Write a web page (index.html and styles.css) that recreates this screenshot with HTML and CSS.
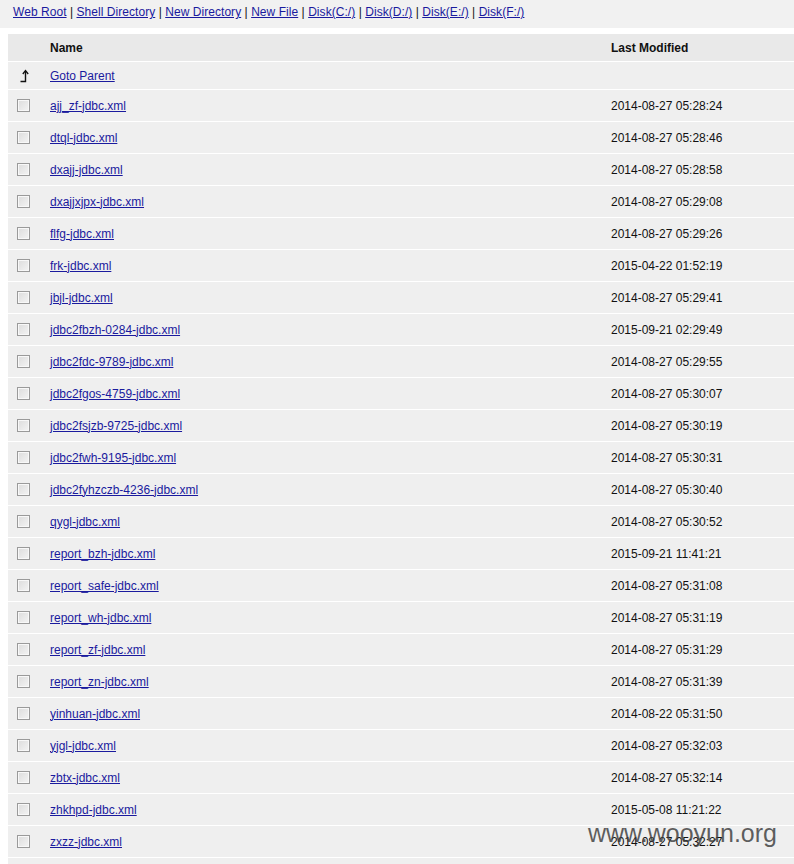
FILE: index.html
```html
<!DOCTYPE html>
<html>
<head>
<meta charset="utf-8">
<link rel="stylesheet" href="styles.css">
</head>
<body>
<div class="topbar">
  <a href="#">Web Root</a> | <a href="#">Shell Directory</a> | <a href="#">New Directory</a> | <a href="#">New File</a> | <a href="#">Disk(C:/)</a> | <a href="#">Disk(D:/)</a> | <a href="#">Disk(E:/)</a> | <a href="#">Disk(F:/)</a>
</div>
<table class="files">
  <tr class="head"><td class="c1"></td><td class="c2">Name</td><td class="c3">Last Modified</td></tr>
  <tr class="parent"><td class="c1"><svg class="up" width="12" height="14" viewBox="0 0 12 14"><path d="M6.5 2 V12.5 H1.5" fill="none" stroke="#111" stroke-width="1.4"/><path d="M3.8 5 L6.5 1.5 L9.2 5" fill="none" stroke="#111" stroke-width="1.3"/></svg></td><td class="c2"><a href="#">Goto Parent</a></td><td class="c3"></td></tr>
  <tr><td class="c1"><span class="cb"></span></td><td class="c2"><a href="#">ajj_zf-jdbc.xml</a></td><td class="c3">2014-08-27 05:28:24</td></tr>
  <tr><td class="c1"><span class="cb"></span></td><td class="c2"><a href="#">dtql-jdbc.xml</a></td><td class="c3">2014-08-27 05:28:46</td></tr>
  <tr><td class="c1"><span class="cb"></span></td><td class="c2"><a href="#">dxajj-jdbc.xml</a></td><td class="c3">2014-08-27 05:28:58</td></tr>
  <tr><td class="c1"><span class="cb"></span></td><td class="c2"><a href="#">dxajjxjpx-jdbc.xml</a></td><td class="c3">2014-08-27 05:29:08</td></tr>
  <tr><td class="c1"><span class="cb"></span></td><td class="c2"><a href="#">flfg-jdbc.xml</a></td><td class="c3">2014-08-27 05:29:26</td></tr>
  <tr><td class="c1"><span class="cb"></span></td><td class="c2"><a href="#">frk-jdbc.xml</a></td><td class="c3">2015-04-22 01:52:19</td></tr>
  <tr><td class="c1"><span class="cb"></span></td><td class="c2"><a href="#">jbjl-jdbc.xml</a></td><td class="c3">2014-08-27 05:29:41</td></tr>
  <tr><td class="c1"><span class="cb"></span></td><td class="c2"><a href="#">jdbc2fbzh-0284-jdbc.xml</a></td><td class="c3">2015-09-21 02:29:49</td></tr>
  <tr><td class="c1"><span class="cb"></span></td><td class="c2"><a href="#">jdbc2fdc-9789-jdbc.xml</a></td><td class="c3">2014-08-27 05:29:55</td></tr>
  <tr><td class="c1"><span class="cb"></span></td><td class="c2"><a href="#">jdbc2fgos-4759-jdbc.xml</a></td><td class="c3">2014-08-27 05:30:07</td></tr>
  <tr><td class="c1"><span class="cb"></span></td><td class="c2"><a href="#">jdbc2fsjzb-9725-jdbc.xml</a></td><td class="c3">2014-08-27 05:30:19</td></tr>
  <tr><td class="c1"><span class="cb"></span></td><td class="c2"><a href="#">jdbc2fwh-9195-jdbc.xml</a></td><td class="c3">2014-08-27 05:30:31</td></tr>
  <tr><td class="c1"><span class="cb"></span></td><td class="c2"><a href="#">jdbc2fyhzczb-4236-jdbc.xml</a></td><td class="c3">2014-08-27 05:30:40</td></tr>
  <tr><td class="c1"><span class="cb"></span></td><td class="c2"><a href="#">qygl-jdbc.xml</a></td><td class="c3">2014-08-27 05:30:52</td></tr>
  <tr><td class="c1"><span class="cb"></span></td><td class="c2"><a href="#">report_bzh-jdbc.xml</a></td><td class="c3">2015-09-21 11:41:21</td></tr>
  <tr><td class="c1"><span class="cb"></span></td><td class="c2"><a href="#">report_safe-jdbc.xml</a></td><td class="c3">2014-08-27 05:31:08</td></tr>
  <tr><td class="c1"><span class="cb"></span></td><td class="c2"><a href="#">report_wh-jdbc.xml</a></td><td class="c3">2014-08-27 05:31:19</td></tr>
  <tr><td class="c1"><span class="cb"></span></td><td class="c2"><a href="#">report_zf-jdbc.xml</a></td><td class="c3">2014-08-27 05:31:29</td></tr>
  <tr><td class="c1"><span class="cb"></span></td><td class="c2"><a href="#">report_zn-jdbc.xml</a></td><td class="c3">2014-08-27 05:31:39</td></tr>
  <tr><td class="c1"><span class="cb"></span></td><td class="c2"><a href="#">yinhuan-jdbc.xml</a></td><td class="c3">2014-08-22 05:31:50</td></tr>
  <tr><td class="c1"><span class="cb"></span></td><td class="c2"><a href="#">yjgl-jdbc.xml</a></td><td class="c3">2014-08-27 05:32:03</td></tr>
  <tr><td class="c1"><span class="cb"></span></td><td class="c2"><a href="#">zbtx-jdbc.xml</a></td><td class="c3">2014-08-27 05:32:14</td></tr>
  <tr><td class="c1"><span class="cb"></span></td><td class="c2"><a href="#">zhkhpd-jdbc.xml</a></td><td class="c3">2015-05-08 11:21:22</td></tr>
  <tr><td class="c1"><span class="cb"></span></td><td class="c2"><a href="#">zxzz-jdbc.xml</a></td><td class="c3">2014-08-27 05:32:27</td></tr>
  <tr><td class="c1"></td><td class="c2"></td><td class="c3"></td></tr>
</table>
<div class="watermark">www.wooyun.org</div>
</body>
</html>
```
FILE: styles.css
```css
html, body {
  margin: 0;
  padding: 0;
  background: #ffffff;
  overflow: hidden;
}
body {
  font-family: "Liberation Sans", Arial, sans-serif;
  font-size: 12px;
  color: #111;
  height: 864px;
  position: relative;
}
a {
  color: #1a1a9e;
  text-decoration: underline;
}
.topbar {
  background: #f1f1f1;
  height: 23px;
  padding: 5px 0 0 13px;
  line-height: 15px;
  margin-bottom: 5px;
  color: #111;
  letter-spacing: 0.05px;
}
.files {
  margin-left: 8px;
  width: 786px;
  border-collapse: collapse;
}
.files td {
  background: #efefef;
  border-bottom: 1px solid #ffffff;
  padding: 0;
  height: 31px;
  vertical-align: middle;
  white-space: nowrap;
}
.files tr.head td {
  background: #e9e9e9;
  height: 27px;
  font-weight: bold;
  border-top: 1px solid #ffffff;
}
.files tr.parent td {
  height: 27px;
}
.c1 {
  width: 42px;
  padding-left: 0;
}
.c2 {
  width: 561px;
}
.c3 {
  color: #111;
}
.cb {
  display: block;
  width: 11px;
  height: 11px;
  margin-left: 9px;
  border: 1px solid #9a9a9a;
  background: linear-gradient(135deg, #dcdcdc 0%, #f4f4f4 100%);
  box-shadow: inset 0 0 0 1px #f8f8f8;
}
.up {
  display: block;
  margin-left: 11px;
}
.watermark {
  position: absolute;
  left: 588px;
  top: 819px;
  font-family: "Liberation Sans", Arial, sans-serif;
  font-size: 25px;
  color: rgba(60, 60, 60, 0.82);
}
```
